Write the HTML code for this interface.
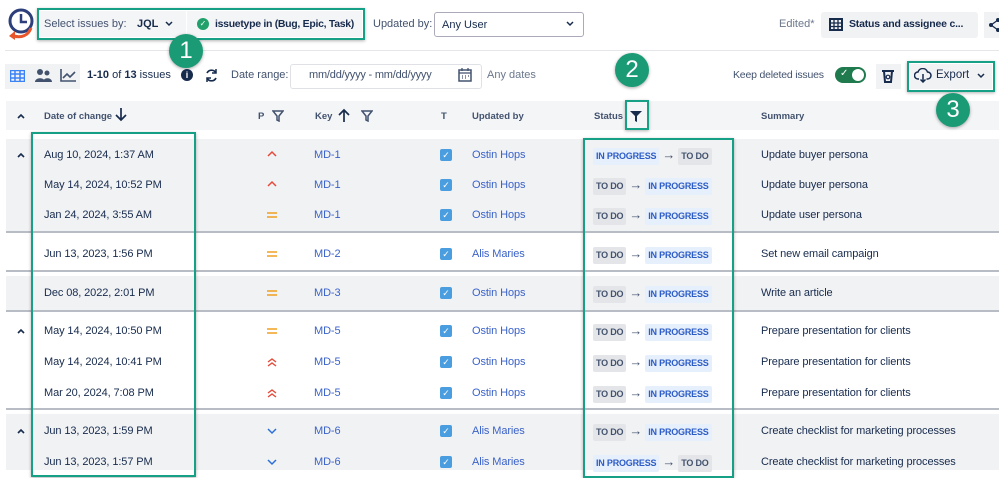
<!DOCTYPE html>
<html><head><style>
*{box-sizing:border-box;margin:0;padding:0}
body{width:999px;height:470px;overflow:hidden;background:#fff;font-family:"Liberation Sans",sans-serif;color:#172b4d;position:relative;font-size:11px}
.a{position:absolute;white-space:nowrap}
.gb{position:absolute;border:2.5px solid #16a085;box-shadow:0 1px 3px rgba(0,0,0,.3)}
.circ{position:absolute;width:34px;height:34px;border-radius:50%;background:#1a9b76;color:#fff;font-size:24px;text-align:center;line-height:34px;box-shadow:0 1px 3px rgba(0,0,0,.35)}
.grp{position:absolute;left:6px;width:993px}
.grey{background:#f1f2f4}
.sep{position:absolute;left:6px;width:993px;height:2px;background:#b8bcc4}
.row{position:absolute;left:0;width:999px;height:20px;font-size:11px;line-height:20px;letter-spacing:-0.1px}
.row > .c{position:absolute;white-space:nowrap}
.lk{color:#3a62c9}
.cb{position:absolute;width:12px;height:12px;background:#4a9ee0;border-radius:2px;top:4px;left:440px;color:#fff;font-size:9px;line-height:12px;text-align:center}
.td{display:inline-block;background:#e4e5e8;color:#42526e;font-weight:bold;font-size:9px;padding:0 3px;line-height:17px;border-radius:2px;letter-spacing:-0.2px}
.ip{display:inline-block;background:#e6effc;color:#2c5cc5;font-weight:bold;font-size:9px;padding:0 3px;line-height:17px;border-radius:2px;letter-spacing:-0.2px}
.st{position:absolute;left:593px;top:1px;white-space:nowrap;line-height:17px}
.ar{display:inline-block;color:#42526e;font-size:13px;font-weight:bold;margin:0 3px}
.h{font-size:9.5px;font-weight:bold;color:#42526e}
</style></head><body>
<svg class="a" style="left:5px;top:6px" width="32" height="38" viewBox="0 0 32 38"><circle cx="16" cy="15" r="11" fill="none" stroke="#2d3f7a" stroke-width="3"/><path d="M16 8v8h6" fill="none" stroke="#2d3f7a" stroke-width="2.5"/><path d="M26 22c-3 8-10 10-17 8" fill="none" stroke="#e8552b" stroke-width="3"/><path d="M4 30l6-5v9z" fill="#e8552b"/></svg>
<div class="a" style="left:40px;top:11px;width:146px;height:26px;background:#f4f5f7"></div>
<div class="a" style="left:44px;top:18px;font-size:11px;color:#42526e">Select issues by:</div>
<div class="a" style="left:137px;top:18px;font-size:11px;font-weight:bold">JQL</div>
<svg class="a" style="left:165px;top:21px" width="8" height="6"><path d="M1 1l3 3 3-3" fill="none" stroke="#172b4d" stroke-width="1.5"/></svg>
<div class="a" style="left:187px;top:11px;width:175px;height:26px;background:#f4f5f7"></div>
<div class="a" style="left:197px;top:18px;width:12px;height:12px;border-radius:50%;background:#22a06b;color:#fff;font-size:8px;text-align:center;line-height:12px">✓</div>
<div class="a" style="left:215px;top:18px;font-size:10.5px;font-weight:bold;letter-spacing:-0.3px">issuetype in (Bug, Epic, Task)</div>
<div class="gb" style="left:37px;top:8px;width:328px;height:32px"></div>
<div class="a" style="left:373px;top:18px;color:#42526e">Updated by:</div>
<div class="a" style="left:434px;top:12px;width:150px;height:25px;border:1px solid #aab;border-radius:3px;padding:6px 7px">Any User</div>
<svg class="a" style="left:566px;top:21px" width="8" height="6"><path d="M1 1l3 3 3-3" fill="none" stroke="#172b4d" stroke-width="1.5"/></svg>
<div class="a" style="left:779px;top:18px;color:#6b778c">Edited*</div>
<div class="a" style="left:821px;top:12px;width:157px;height:26px;background:#f1f2f4;border-radius:3px"></div>
<svg class="a" style="left:829px;top:18px" width="14" height="13"><rect x="1" y="1" width="12" height="11" fill="none" stroke="#172b4d" stroke-width="2"/><path d="M1 5h12M1 8.5h12M5 1v11M9 1v11" stroke="#172b4d" stroke-width="1.3"/></svg>
<div class="a" style="left:849px;top:18px;font-weight:bold;font-size:10.5px;letter-spacing:-0.2px">Status and assignee c...</div>
<div class="a" style="left:984px;top:12px;width:15px;height:26px;background:#f1f2f4"></div>
<svg class="a" style="left:988px;top:18px" width="11" height="14"><circle cx="3" cy="7" r="2" fill="#172b4d"/><circle cx="10" cy="2" r="2" fill="#172b4d"/><circle cx="10" cy="12" r="2" fill="#172b4d"/><path d="M3 7L10 2M3 7l7 5" stroke="#172b4d" stroke-width="1.3"/></svg>
<div class="a" style="left:5px;top:50px;width:994px;height:1px;background:#e4e6ea"></div>
<div class="circ" style="left:169px;top:34px">1</div>

<div class="a" style="left:5px;top:64px;width:75px;height:25px;background:#f1f2f4"></div>
<svg class="a" style="left:10px;top:70px" width="15" height="12"><rect x="0.5" y="0.5" width="14" height="11" fill="none" stroke="#3b82f6" stroke-width="1.5"/><path d="M0 4h15M0 8h15M5 0v12M10 0v12" stroke="#3b82f6" stroke-width="1.5"/></svg>
<svg class="a" style="left:35px;top:68px" width="17" height="15"><circle cx="5" cy="4" r="3" fill="#42526e"/><circle cx="12" cy="5" r="2.5" fill="#42526e"/><path d="M0 14c0-5 10-5 10 0zM8 14c0-5 9-5 9 0z" fill="#42526e"/></svg>
<svg class="a" style="left:60px;top:69px" width="16" height="13"><path d="M1 0v12h15M3 9l4-4 3 3 5-5" fill="none" stroke="#42526e" stroke-width="1.6"/></svg>
<div class="a" style="left:87px;top:69px"><b>1-10</b> of <b>13</b> issues</div>
<div class="a" style="left:181px;top:69px;width:12px;height:12px;border-radius:50%;background:#172b4d;color:#fff;font-size:9px;text-align:center;line-height:12px;font-weight:bold">i</div>
<svg class="a" style="left:204px;top:68px" width="15" height="15"><path d="M3 5a5 5 0 0 1 9 0M12 10a5 5 0 0 1-9 0" fill="none" stroke="#172b4d" stroke-width="1.7"/><path d="M12 1v4H8M3 14v-4h4" fill="none" stroke="#172b4d" stroke-width="1.5"/></svg>
<div class="a" style="left:231px;top:69px;color:#42526e">Date range:</div>
<div class="a" style="left:290px;top:64px;width:192px;height:25px;border:1px solid #dfe1e6;border-radius:3px"></div>
<div class="a" style="left:309px;top:69px;color:#42526e;letter-spacing:-0.2px">mm/dd/yyyy - mm/dd/yyyy</div>
<svg class="a" style="left:458px;top:68px" width="14" height="14"><rect x="1" y="2" width="12" height="11" fill="none" stroke="#42526e" stroke-width="1.5"/><path d="M1 5h12M4 0v3M10 0v3M4 8h1M7 8h1M10 8h1M4 10h1M7 10h1" stroke="#42526e" stroke-width="1.3"/></svg>
<div class="a" style="left:487px;top:69px;color:#6b778c">Any dates</div>
<div class="circ" style="left:615px;top:53px">2</div>
<div class="a" style="left:733px;top:69px;color:#42526e;font-size:10.5px;letter-spacing:-0.2px">Keep deleted issues</div>
<div class="a" style="left:835px;top:67px;width:31px;height:16px;border-radius:8px;background:#1f7a4d"></div>
<div class="a" style="left:840px;top:68px;color:#fff;font-size:10px">✓</div>
<div class="a" style="left:852px;top:69px;width:12px;height:12px;border-radius:50%;background:#fff"></div>
<div class="a" style="left:876px;top:64px;width:25px;height:25px;background:#f1f2f4"></div>
<svg class="a" style="left:882px;top:69px" width="12" height="14"><path d="M0 2h12M2 2l1 11h6l1-11" fill="none" stroke="#172b4d" stroke-width="2"/><circle cx="6" cy="8" r="1.8" fill="none" stroke="#172b4d" stroke-width="1.2"/></svg>
<div class="a" style="left:910px;top:64px;width:82px;height:25px;background:#f1f2f4"></div>
<svg class="a" style="left:914px;top:68px" width="18" height="15"><path d="M5 11H4a3.5 3.5 0 0 1 0-7 5 5 0 0 1 9.5 0 3.5 3.5 0 0 1 0 7h-1M9 6v8M6.5 11.5L9 14l2.5-2.5" fill="none" stroke="#172b4d" stroke-width="1.5"/></svg>
<div class="a" style="left:936px;top:69px;font-size:11.5px">Export</div>
<svg class="a" style="left:977px;top:73px" width="8" height="6"><path d="M1 1l3 3 3-3" fill="none" stroke="#172b4d" stroke-width="1.5"/></svg>
<div class="gb" style="left:907px;top:61px;width:88px;height:31px"></div>

<div class="a" style="left:6px;top:101px;width:993px;height:29px;background:#f4f5f7"></div>
<svg class="a" style="left:17px;top:113px" width="8" height="6"><path d="M1 5l3-3 3 3" fill="none" stroke="#172b4d" stroke-width="1.6"/></svg>
<div class="a h" style="left:44px;top:111px">Date of change</div>
<svg class="a" style="left:115px;top:108px" width="12" height="14"><path d="M6 0v12M1 7l5 5 5-5" fill="none" stroke="#172b4d" stroke-width="1.7"/></svg>
<div class="a h" style="left:258px;top:111px">P</div>
<svg class="a" style="left:272px;top:110px" width="12" height="12"><path d="M1 1h10L7 6v5L5 10V6z" fill="none" stroke="#42526e" stroke-width="1.5"/></svg>
<div class="a h" style="left:315px;top:111px">Key</div>
<svg class="a" style="left:338px;top:108px" width="12" height="14"><path d="M6 14V2M1 7l5-5 5 5" fill="none" stroke="#172b4d" stroke-width="1.7"/></svg>
<svg class="a" style="left:361px;top:110px" width="12" height="12"><path d="M1 1h10L7 6v5L5 10V6z" fill="none" stroke="#42526e" stroke-width="1.5"/></svg>
<div class="a h" style="left:441px;top:111px">T</div>
<div class="a h" style="left:472px;top:111px">Updated by</div>
<div class="a h" style="left:594px;top:111px">Status</div>
<svg class="a" style="left:630px;top:110px" width="12" height="12"><path d="M0 1h12L7 6v6L5 11V6z" fill="#172b4d"/></svg>
<div class="gb" style="left:625px;top:100px;width:24px;height:30px"></div>
<div class="a h" style="left:761px;top:111px">Summary</div>
<div class="circ" style="left:936px;top:93px">3</div>

<div class="grp grey" style="top:139px;height:93px"></div>
<div class="sep" style="top:231px"></div>
<div class="sep" style="top:270px"></div>
<div class="grp grey" style="top:276px;height:34px"></div>
<div class="sep" style="top:310px"></div>
<div class="sep" style="top:408px"></div>
<div class="grp grey" style="top:414px;height:56px"></div>

<svg width="0" height="0" style="position:absolute"><defs>
<g id="hi"><path d="M1 6l4-4 4 4" fill="none" stroke="#e5493a" stroke-width="1.5"/></g>
<g id="med"><path d="M0 3h10M0 7h10" stroke="#f0a020" stroke-width="1.6"/></g>
<g id="hh"><path d="M1 5l4-3 4 3M1 9l4-3 4 3" fill="none" stroke="#e5493a" stroke-width="1.4"/></g>
<g id="lo"><path d="M1 3l4 4 4-4" fill="none" stroke="#2c6fd6" stroke-width="1.5"/></g>
<g id="up"><path d="M1 5l3-3 3 3" fill="none" stroke="#172b4d" stroke-width="1.6"/></g>
</defs></svg>

<div class="row" style="top:145px"><svg class="c" style="left:17px;top:7px" width="8" height="6"><use href="#up"/></svg><span class="c" style="left:44px">Aug 10, 2024, 1:37 AM</span><svg class="c" style="left:267px;top:5px" width="10" height="10"><use href="#hi"/></svg><span class="c lk" style="left:314px">MD-1</span><span class="cb">✓</span><span class="c lk" style="left:472px">Ostin Hops</span><div class="st"><span class="ip">IN PROGRESS</span><span class="ar">→</span><span class="td">TO DO</span></div><span class="c" style="left:761px">Update buyer persona</span></div>
<div class="row" style="top:175px"><span class="c" style="left:44px">May 14, 2024, 10:52 PM</span><svg class="c" style="left:267px;top:5px" width="10" height="10"><use href="#hi"/></svg><span class="c lk" style="left:314px">MD-1</span><span class="cb">✓</span><span class="c lk" style="left:472px">Ostin Hops</span><div class="st"><span class="td">TO DO</span><span class="ar">→</span><span class="ip">IN PROGRESS</span></div><span class="c" style="left:761px">Update buyer persona</span></div>
<div class="row" style="top:205px"><span class="c" style="left:44px">Jan 24, 2024, 3:55 AM</span><svg class="c" style="left:267px;top:5px" width="10" height="10"><use href="#med"/></svg><span class="c lk" style="left:314px">MD-1</span><span class="cb">✓</span><span class="c lk" style="left:472px">Ostin Hops</span><div class="st"><span class="td">TO DO</span><span class="ar">→</span><span class="ip">IN PROGRESS</span></div><span class="c" style="left:761px">Update user persona</span></div>
<div class="row" style="top:244px"><span class="c" style="left:44px">Jun 13, 2023, 1:56 PM</span><svg class="c" style="left:267px;top:5px" width="10" height="10"><use href="#med"/></svg><span class="c lk" style="left:314px">MD-2</span><span class="cb">✓</span><span class="c lk" style="left:472px">Alis Maries</span><div class="st"><span class="td">TO DO</span><span class="ar">→</span><span class="ip">IN PROGRESS</span></div><span class="c" style="left:761px">Set new email campaign</span></div>
<div class="row" style="top:283px"><span class="c" style="left:44px">Dec 08, 2022, 2:01 PM</span><svg class="c" style="left:267px;top:5px" width="10" height="10"><use href="#med"/></svg><span class="c lk" style="left:314px">MD-3</span><span class="cb">✓</span><span class="c lk" style="left:472px">Ostin Hops</span><div class="st"><span class="td">TO DO</span><span class="ar">→</span><span class="ip">IN PROGRESS</span></div><span class="c" style="left:761px">Write an article</span></div>
<div class="row" style="top:321px"><svg class="c" style="left:17px;top:7px" width="8" height="6"><use href="#up"/></svg><span class="c" style="left:44px">May 14, 2024, 10:50 PM</span><svg class="c" style="left:267px;top:5px" width="10" height="10"><use href="#med"/></svg><span class="c lk" style="left:314px">MD-5</span><span class="cb">✓</span><span class="c lk" style="left:472px">Ostin Hops</span><div class="st"><span class="td">TO DO</span><span class="ar">→</span><span class="ip">IN PROGRESS</span></div><span class="c" style="left:761px">Prepare presentation for clients</span></div>
<div class="row" style="top:352px"><span class="c" style="left:44px">May 14, 2024, 10:41 PM</span><svg class="c" style="left:267px;top:5px" width="10" height="10"><use href="#hh"/></svg><span class="c lk" style="left:314px">MD-5</span><span class="cb">✓</span><span class="c lk" style="left:472px">Ostin Hops</span><div class="st"><span class="td">TO DO</span><span class="ar">→</span><span class="ip">IN PROGRESS</span></div><span class="c" style="left:761px">Prepare presentation for clients</span></div>
<div class="row" style="top:383px"><span class="c" style="left:44px">Mar 20, 2024, 7:08 PM</span><svg class="c" style="left:267px;top:5px" width="10" height="10"><use href="#hh"/></svg><span class="c lk" style="left:314px">MD-5</span><span class="cb">✓</span><span class="c lk" style="left:472px">Ostin Hops</span><div class="st"><span class="td">TO DO</span><span class="ar">→</span><span class="ip">IN PROGRESS</span></div><span class="c" style="left:761px">Prepare presentation for clients</span></div>
<div class="row" style="top:421px"><svg class="c" style="left:17px;top:7px" width="8" height="6"><use href="#up"/></svg><span class="c" style="left:44px">Jun 13, 2023, 1:59 PM</span><svg class="c" style="left:267px;top:5px" width="10" height="10"><use href="#lo"/></svg><span class="c lk" style="left:314px">MD-6</span><span class="cb">✓</span><span class="c lk" style="left:472px">Alis Maries</span><div class="st"><span class="td">TO DO</span><span class="ar">→</span><span class="ip">IN PROGRESS</span></div><span class="c" style="left:761px">Create checklist for marketing processes</span></div>
<div class="row" style="top:452px"><span class="c" style="left:44px">Jun 13, 2023, 1:57 PM</span><svg class="c" style="left:267px;top:5px" width="10" height="10"><use href="#lo"/></svg><span class="c lk" style="left:314px">MD-6</span><span class="cb">✓</span><span class="c lk" style="left:472px">Alis Maries</span><div class="st"><span class="ip">IN PROGRESS</span><span class="ar">→</span><span class="td">TO DO</span></div><span class="c" style="left:761px">Create checklist for marketing processes</span></div>

<div class="gb" style="left:31px;top:132px;width:165px;height:345px"></div>
<div class="gb" style="left:583px;top:138px;width:151px;height:340px"></div>
</body></html>
